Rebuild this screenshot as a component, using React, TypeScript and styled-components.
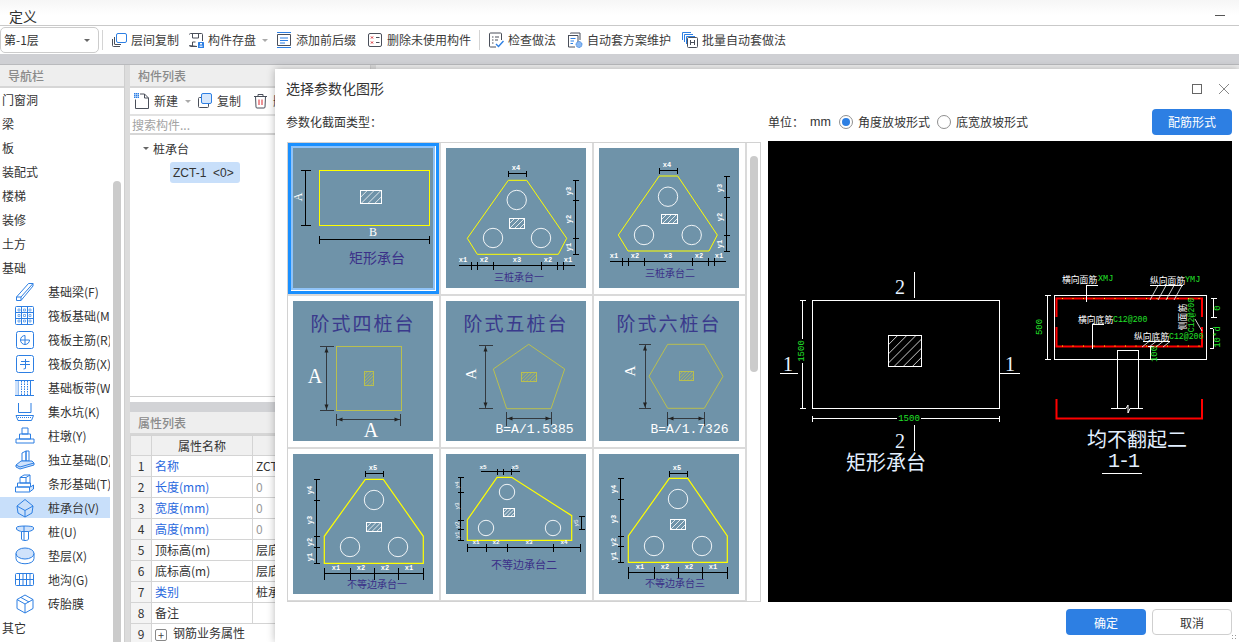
import React, { useId } from "react";
import styled, { createGlobalStyle } from "styled-components";

const SANS = '"Noto Sans CJK SC", "Liberation Sans", sans-serif';
const BLUE = "#2d7fe3";
const DARK = "#4a4f5a";

const Global = createGlobalStyle`
  html, body { margin: 0; padding: 0; background: #fff; overflow: hidden; }
  *, *::before, *::after { box-sizing: border-box; }
`;

const Page = styled.div`
  position: relative; width: 1239px; height: 642px; overflow: hidden;
  display: flex; flex-direction: column; font: 12px/1 ${SANS}; color: #333; background: #fff;
`;
const MenuBar = styled.div`
  height: 26px; flex: none; display: flex; align-items: center; justify-content: space-between;
  padding: 6px 14px 0 9px; font-size: 14px; color: #333;
  background: linear-gradient(#f6f6f6, #fff 60%); border-bottom: 1px solid #c9c9c9;
`;
const MinDash = styled.span` width: 10px; height: 1px; background: #555; `;
const Toolbar = styled.div` height: 28px; flex: none; display: flex; align-items: center; background: #fff; `;
const FloorSelect = styled.div`
  width: 99px; height: 26px; border: 1px solid #ccc; border-radius: 5px; display: flex; align-items: center;
  justify-content: space-between; padding: 0 8px 0 3px; font-size: 12px; margin-right: 3px;
`;
const Caret = styled.i<{ $c?: string }>`
  display: inline-block; width: 0; height: 0; border-left: 3px solid transparent; border-right: 3px solid transparent;
  border-top: 3px solid ${(p) => p.$c || "#666"};
`;
const Sep = styled.span<{ $ml: number }>` width: 1px; height: 20px; background: #d4d4d4; margin-left: ${(p) => p.$ml}px; `;
const ToolItem = styled.div<{ $ml: number }>`
  display: flex; align-items: center; gap: 4px; margin-left: ${(p) => p.$ml}px; white-space: nowrap; color: #3c3c3c;
`;
const Band = styled.div` height: 11px; flex: none; background: #cfd0d4; border-bottom: 1px solid #b9babd; `;
const Main = styled.div` flex: 1; min-height: 0; display: flex; background: #dcdcdc; `;
const Nav = styled.div` width: 124px; flex: none; position: relative; background: #fff; overflow: hidden; `;
const PanelHead = styled.div`
  height: 23px; display: flex; align-items: center; padding-left: 8px; background: #eeeeee;
  border-bottom: 2px solid #d6d6d6; color: #8a8a8a; font-weight: 500; flex: none;
`;
const NavList = styled.div` display: flex; flex-direction: column; gap: 3px; padding-top: 1px; width: 110px; `;
const NavTop = styled.div` height: 21px; display: flex; align-items: center; padding-left: 2px; `;
const NavSub = styled.div<{ $on?: boolean }>`
  height: 21px; display: flex; align-items: center; padding-left: 15px; gap: 13px; white-space: nowrap; overflow: hidden;
  background: ${(p) => (p.$on ? "#c8dffa" : "transparent")};
`;
const NavScroll = styled.div` position: absolute; left: 113px; top: 116px; bottom: 0; width: 8px; background: #cbcbcb; border-radius: 4px 4px 0 0; `;
const Gutter = styled.div` width: 6px; flex: none; background: #dcdcdc; border-left: 1px solid #cfcfcf; `;
const Center = styled.div` width: 240px; flex: none; display: flex; flex-direction: column; `;
const ListPanel = styled.div` height: 332px; flex: none; background: #fff; display: flex; flex-direction: column; border-bottom: 1px solid #ccc; `;
const ListTools = styled.div` height: 28px; flex: none; display: flex; align-items: center; padding-left: 4px; border-bottom: 2px solid #e2e2e2; `;
const SearchBox = styled.div`
  height: 19px; flex: none; display: flex; align-items: center; padding-left: 2px; color: #a3a3a3; border-bottom: 2px solid #d6d6d6;
`;
const TreeRoot = styled.div` height: 27px; display: flex; align-items: center; gap: 4px; padding-left: 13px; `;
const Chip = styled.div`
  margin-left: 40px; width: 70px; height: 21px; display: flex; align-items: center; padding-left: 3px; border-radius: 3px; background: #c8dffa;
  font-family: "Liberation Sans", sans-serif; white-space: pre; font-size: 12px;
`;
const SplitBand = styled.div` height: 15px; flex: none; background: linear-gradient(#fff 33%, #d2d3d6 33%); `;
const PropPanel = styled.div` flex: 1; background: #fff; display: flex; flex-direction: column; overflow: hidden; `;
const PropTable = styled.table`
  border-collapse: collapse; table-layout: fixed; width: 240px; font-size: 12px;
  td, th { border: 1px solid #d4d4d4; height: 21px; padding: 0 3px; font-weight: 400; white-space: nowrap; overflow: hidden; }
  th { background: #f0f0f0; height: 20px; }
`;
const NumCell = styled.td` background: #f4f4f4; text-align: center; `;
const NameCell = styled.td<{ $link?: boolean }>` color: ${(p) => (p.$link ? "#2a69de" : "#333")}; `;
const ValCell = styled.td<{ $muted?: boolean }>` color: ${(p) => (p.$muted ? "#999" : "#333")}; `;
const PlusBox = styled.span`
  display: inline-flex; width: 12px; height: 12px; border: 1px solid #888; border-radius: 2px; align-items: center; justify-content: center;
  font-size: 11px; margin: 0 6px 0 0; vertical-align: -2px; color: #444;
`;
const RightPanel = styled.div` flex: 1; background: #fff; `;

const Dialog = styled.div`
  position: absolute; left: 275px; top: 69px; width: 964px; height: 573px; background: #fff;
  box-shadow: 0 0 8px rgba(0,0,0,.28); display: flex; flex-direction: column;
`;
const DlgTitle = styled.div`
  height: 39px; flex: none; display: flex; align-items: center; justify-content: space-between; padding: 0 10px 2px 11px; font-size: 14px; color: #333;
`;
const WinBtns = styled.div` display: flex; gap: 17px; align-items: center; padding-top: 2px; `;
const DlgBody = styled.div` flex: 1; min-height: 0; display: flex; padding-left: 12px; `;
const LeftCol = styled.div` width: 481px; flex: none; display: flex; flex-direction: column; `;
const SecLabel = styled.div` height: 34px; flex: none; display: flex; align-items: center; margin-left: -1px; padding-bottom: 6px; `;
const Gallery = styled.div` height: 461px; width: 474px; border: 1px solid #d2d2d2; display: flex; overflow: hidden; position: relative; `;
const Cells = styled.div` display: grid; grid-template-columns: repeat(3, 153px); grid-auto-rows: 153px; width: 459px; flex: none; `;
const Cell = styled.div<{ $on?: boolean }>`
  padding: 5px; border-right: 2px solid #dadada; border-bottom: 2px solid #dadada; position: relative;
  &::before { content: ""; position: absolute; left: 0; top: 0; width: 151px; height: 151px; border: 3px solid ${(p) => (p.$on ? "#1a90ff" : "transparent")}; }
`;
const ThumbSvg = styled.svg<{ $on?: boolean }>`
  display: block; background: #6f93a9; width: 140px; height: 140px; box-shadow: ${(p) => (p.$on ? "0 0 0 2px #8fc3f8" : "none")};
`;
const GalleryScroll = styled.div` position: absolute; left: 462px; top: 13px; width: 8px; height: 216px; background: #cbcbcb; border-radius: 4px; `;
const RightCol = styled.div` width: 464px; flex: none; display: flex; flex-direction: column; `;
const OptRow = styled.div` height: 33px; flex: none; display: flex; align-items: center; padding-bottom: 6px; color: #333; `;
const Unit = styled.span` width: 42px; `;
const UnitVal = styled.span` width: 29px; font-family: "Liberation Sans", sans-serif; font-size: 12.5px; padding-top: 2px; `;
const RadioLabel = styled.label` display: flex; align-items: center; gap: 5px; margin-right: 7px; `;
const Radio = styled.span<{ $on?: boolean }>`
  width: 14px; height: 14px; border-radius: 50%; border: 1px solid #8f8f8f; display: flex; align-items: center; justify-content: center;
  &::after { content: ""; width: 8px; height: 8px; border-radius: 50%; background: ${(p) => (p.$on ? BLUE : "transparent")}; }
`;
const Spacer = styled.span` flex: 1; `;
const PrimaryBtn = styled.button`
  width: 80px; height: 26px; border: 0; border-radius: 4px; background: ${BLUE}; color: #fff; font: 12px ${SANS}; padding: 0;
`;
const GhostBtn = styled.button`
  width: 80px; height: 26px; border: 1px solid #cfcfcf; border-radius: 4px; background: #fff; color: #333; font: 12px ${SANS}; padding: 0;
`;
const Preview = styled.svg` display: block; width: 464px; height: 461px; background: #000; `;
const Footer = styled.div` height: 40px; flex: none; display: flex; justify-content: flex-end; align-items: flex-start; gap: 6px; padding: 7px 7px 0 0; `;
const Grip = styled.span`
  position: absolute; right: 1px; bottom: 1px; width: 7px; height: 7px;
  background-image: radial-gradient(#999 1px, transparent 1px); background-size: 3px 3px;
`;

/* ---------- svg helpers ---------- */
type TP = { x: number; y: number; s?: number; c?: string; rot?: number; f?: string; w?: number; a?: "middle" | "start"; ls?: number; children: React.ReactNode };
const T = ({ x, y, s = 8, c = "#fff", rot, f = SANS, w = 400, a = "middle", ls, children }: TP) => (
  <text x={x} y={y} fontSize={s} fill={c} fontFamily={f} fontWeight={w} textAnchor={a} dominantBaseline="central" letterSpacing={ls}
    transform={rot ? `rotate(${rot} ${x} ${y})` : undefined}>{children}</text>
);
const MONO = '"Liberation Mono", monospace';
const SER = '"Liberation Serif", "Noto Sans CJK SC", serif';

const L = ({ x1, y1, x2, y2, c = "#000", w = 1 }: { x1: number; y1: number; x2: number; y2: number; c?: string; w?: number }) => (
  <line x1={x1} y1={y1} x2={x2} y2={y2} stroke={c} strokeWidth={w} shapeRendering="crispEdges" />
);
const HDim = ({ y, x1, x2, ticks, t = 4, c = "#000" }: { y: number; x1: number; x2: number; ticks: number[]; t?: number; c?: string }) => (
  <g>
    <L x1={x1} y1={y} x2={x2} y2={y} c={c} />
    {ticks.map((v) => <L key={v} x1={v} y1={y - t} x2={v} y2={y + t} c={c} />)}
  </g>
);
const VDim = ({ x, y1, y2, ticks, t = 3, c = "#000" }: { x: number; y1: number; y2: number; ticks: number[]; t?: number; c?: string }) => (
  <g>
    <L x1={x} y1={y1} x2={x} y2={y2} c={c} />
    {ticks.map((v) => <L key={v} x1={x - t} y1={v} x2={x + t} y2={v} c={c} />)}
  </g>
);
const Hatch = ({ x, y, w, h, c = "#fff", n = 5, sw = 1 }: { x: number; y: number; w: number; h: number; c?: string; n?: number; sw?: number }) => {
  const id = useId();
  const lines = [];
  const step = (w + h) / n;
  for (let i = 1; i < n; i++) {
    const d = i * step;
    lines.push(<line key={i} x1={x + d} y1={y} x2={x + d - h} y2={y + h} stroke={c} strokeWidth={0.8} />);
  }
  return (
    <g>
      <clipPath id={id}><rect x={x} y={y} width={w} height={h} /></clipPath>
      <g clipPath={`url(#${id})`}>{lines}</g>
      <rect x={x} y={y} width={w} height={h} fill="none" stroke={c} strokeWidth={sw} shapeRendering="crispEdges" />
    </g>
  );
};
const Poly = ({ p, c = "#ffff00", w = 1 }: { p: number[][]; c?: string; w?: number }) => (
  <polygon points={p.map((q) => q.join(",")).join(" ")} fill="none" stroke={c} strokeWidth={w} />
);
const Piles = ({ c, r = 9.7 }: { c: number[][]; r?: number }) => (
  <g>{c.map((q, i) => <circle key={i} cx={q[0]} cy={q[1]} r={r} fill="none" stroke="#fff" strokeWidth={0.9} />)}</g>
);
const TITLE = "#3b3088";
const Title = ({ x, y, s = 10, children }: { x: number; y: number; s?: number; children: React.ReactNode }) => <T x={x} y={y} s={s} c={TITLE}>{children}</T>;
const Big = ({ children }: { children: React.ReactNode }) => <T x={70} y={21} s={19} c="#3a3a8c" ls={2}>{children}</T>;
const ArrowV = ({ x, y1, y2, t = 7 }: { x: number; y1: number; y2: number; t?: number }) => (
  <g>
    <L x1={x} y1={y1} x2={x} y2={y2} c="#33393f" />
    <L x1={x - t} y1={y1} x2={x + t} y2={y1} c="#33393f" />
    <L x1={x - t} y1={y2} x2={x + t} y2={y2} c="#33393f" />
    <polygon points={`${x},${y1 + 1} ${x - 2},${y1 + 6} ${x + 2},${y1 + 6}`} fill="#222" />
    <polygon points={`${x},${y2 - 1} ${x - 2},${y2 - 6} ${x + 2},${y2 - 6}`} fill="#222" />
  </g>
);
const ArrowH = ({ y, x1, x2, t = 6 }: { y: number; x1: number; x2: number; t?: number }) => (
  <g>
    <L x1={x1} y1={y} x2={x2} y2={y} c="#33393f" />
    <L x1={x1} y1={y - t} x2={x1} y2={y + t} c="#33393f" />
    <L x1={x2} y1={y - t} x2={x2} y2={y + t} c="#33393f" />
    <polygon points={`${x1 + 1},${y} ${x1 + 6},${y - 2} ${x1 + 6},${y + 2}`} fill="#222" />
    <polygon points={`${x2 - 1},${y} ${x2 - 6},${y - 2} ${x2 - 6},${y + 2}`} fill="#222" />
  </g>
);
const DY = "#b9bf4f";

const thumbs: React.ReactNode[] = [
  <g key="1">
    <rect x={26.5} y={22.5} width={110} height={55} fill="none" stroke="#ffff00" />
    <Hatch x={67.5} y={42.5} w={21} h={13} />
    <VDim x={12.5} y1={22.5} y2={77.5} ticks={[22.5, 77.5]} t={5} />
    <T x={5} y={49} s={12} f={SER} rot={-90}>A</T>
    <HDim y={91.5} x1={26.5} x2={136.5} ticks={[26.5, 136.5]} />
    <T x={80} y={84} s={12} f={SER}>B</T>
    <Title x={84} y={109} s={14}>矩形承台</Title>
  </g>,
  <g key="2">
    <Poly p={[[62.3, 32.3], [80.7, 32.3], [120.7, 90.3], [112.3, 106.3], [31.3, 106.3], [21.3, 90.3]]} />
    <Piles c={[[70.7, 52], [47, 90], [95, 90]]} />
    <Hatch x={63.5} y={70.5} w={15} h={10} />
    <HDim y={25.5} x1={62.5} x2={80.5} ticks={[62.5, 80.5]} t={3} />
    <T x={70} y={20} s={7} f={MONO} w={700}>x4</T>
    <VDim x={129.5} y1={32.5} y2={106.5} ticks={[32.5, 52.5, 90.5, 106.5]} />
    <T x={123} y={43} s={7} f={MONO} rot={-90} w={700}>y3</T><T x={123} y={71} s={7} f={MONO} rot={-90} w={700}>y2</T><T x={123} y={99} s={7} f={MONO} rot={-90} w={700}>y1</T>
    <HDim y={117.5} x1={13} x2={129} ticks={[25.5, 31.5, 47.5, 95.5, 111.5, 117.5]} />
    <T x={17} y={112} s={7} f={MONO} w={700}>x1</T><T x={38} y={112} s={7} f={MONO} w={700}>x2</T><T x={71} y={112} s={7} f={MONO} w={700}>x3</T><T x={102} y={112} s={7} f={MONO} w={700}>x2</T><T x={122} y={112} s={7} f={MONO} w={700}>x1</T>
    <Title x={73} y={128}>三桩承台一</Title>
  </g>,
  <g key="3">
    <Poly p={[[60.3, 28], [78.7, 28], [118.3, 87], [110, 103], [29, 103], [19.3, 87]]} />
    <Piles c={[[69, 48.7], [45, 87], [92.7, 87]]} />
    <Hatch x={62.5} y={66.5} w={16} h={9} />
    <HDim y={22.5} x1={60.5} x2={78.5} ticks={[60.5, 78.5]} t={3} />
    <T x={68} y={17} s={7} f={MONO} w={700}>x4</T>
    <VDim x={127.5} y1={28.5} y2={103.5} ticks={[28.5, 49.5, 87.5, 103.5]} />
    <T x={121} y={40} s={7} f={MONO} rot={-90} w={700}>y3</T><T x={121} y={69} s={7} f={MONO} rot={-90} w={700}>y2</T><T x={121} y={96} s={7} f={MONO} rot={-90} w={700}>y1</T>
    <HDim y={113.5} x1={11} x2={127} ticks={[23.5, 29.5, 45.5, 93.5, 109.5, 115.5]} />
    <T x={15} y={108} s={7} f={MONO} w={700}>x1</T><T x={36} y={108} s={7} f={MONO} w={700}>x2</T><T x={69} y={108} s={7} f={MONO} w={700}>x3</T><T x={100} y={108} s={7} f={MONO} w={700}>x2</T><T x={120} y={108} s={7} f={MONO} w={700}>x1</T>
    <Title x={71} y={124}>三桩承台二</Title>
  </g>,
  <g key="4">
    <Big>阶式四桩台</Big>
    <rect x={43.5} y={45.5} width={65} height={64} fill="none" stroke={DY} />
    <Hatch x={71.5} y={70.5} w={9} h={14} c={DY} n={7} />
    <ArrowV x={33.5} y1={45.5} y2={109.5} />
    <T x={22} y={75} s={20} f={SER}>A</T>
    <ArrowH y={118.5} x1={43.5} x2={107.5} />
    <T x={78} y={129} s={20} f={SER}>A</T>
  </g>,
  <g key="5">
    <Big>阶式五桩台</Big>
    <Poly c={DY} p={[[82.7, 43.3], [118.7, 68], [105, 107.7], [60.7, 107.7], [47.3, 68]]} />
    <Hatch x={75.5} y={71.5} w={15} h={9} c={DY} n={7} />
    <ArrowV x={39.5} y1={44.5} y2={107.5} />
    <T x={25} y={73} s={15} f={SER} rot={-90}>A</T>
    <ArrowH y={117.5} x1={60.5} x2={105.5} t={7} />
    <T x={88.5} y={128.5} s={13} f={MONO}>B=A/1.5385</T>
  </g>,
  <g key="6">
    <Big>阶式六桩台</Big>
    <Poly c={DY} p={[[68.7, 43.3], [105.3, 43.3], [124, 75.3], [105.3, 107.3], [68.7, 107.3], [50, 75.3]]} />
    <Hatch x={80.5} y={70.5} w={14} h={9} c={DY} n={7} />
    <ArrowV x={46} y1={43.5} y2={107.5} t={6} />
    <T x={31} y={70} s={15} f={SER} rot={-90}>A</T>
    <ArrowH y={117.5} x1={68.5} x2={105.5} t={7} />
    <T x={90.5} y={128.5} s={13} f={MONO}>B=A/1.7326</T>
  </g>,
  <g key="7">
    <Poly w={1.2} p={[[72.3, 25.3], [90.3, 25.3], [130.3, 82.3], [130.3, 109.3], [31.3, 109.3], [31.3, 82.3]]} />
    <Piles c={[[81, 46], [57, 93], [105, 93]]} />
    <Hatch x={73.5} y={68.5} w={15} h={9} />
    <HDim y={19.5} x1={72.5} x2={90.5} ticks={[72.5, 90.5]} t={3} />
    <T x={80} y={14} s={7} f={MONO} w={700}>x5</T>
    <VDim x={23.5} y1={25.5} y2={109.5} ticks={[25.5, 46.5, 82.5, 93.5, 109.5]} />
    <T x={17} y={36} s={7} f={MONO} rot={-90} w={700}>y4</T><T x={17} y={66} s={7} f={MONO} rot={-90} w={700}>y3</T><T x={17} y={88} s={7} f={MONO} rot={-90} w={700}>y2</T><T x={17} y={103} s={7} f={MONO} rot={-90} w={700}>y1</T>
    <HDim y={119.5} x1={31.5} x2={130.5} ticks={[31.5, 57.5, 81.5, 105.5, 130.5]} t={6} />
    <T x={43} y={114} s={7} f={MONO} w={700}>x1</T><T x={68} y={114} s={7} f={MONO} w={700}>x2</T><T x={92} y={114} s={7} f={MONO} w={700}>x2</T><T x={116} y={114} s={7} f={MONO} w={700}>x1</T>
    <Title x={84} y={129}>不等边承台一</Title>
  </g>,
  <g key="8">
    <Poly w={1.2} p={[[51, 23.3], [65.7, 23.3], [125.7, 61.7], [125.7, 86.3], [21.3, 86.3], [21.3, 66]]} />
    <Piles r={7.7} c={[[61, 38], [40, 74], [107, 74]]} />
    <Hatch x={57.5} y={54.5} w={11} h={8} />
    <HDim y={17.5} x1={34.5} x2={73.5} ticks={[51.5, 57.5, 65.5]} t={3} />
    <T x={37} y={13} s={6} f={MONO} w={700}>x5</T><T x={69} y={13} s={6} f={MONO} w={700}>x5</T>
    <VDim x={14.5} y1={23.5} y2={86.5} ticks={[23.5, 38.5, 66.5, 75.5, 86.5]} />
    <T x={11} y={31} s={6} f={MONO} rot={-90}>y4</T><T x={11} y={52} s={6} f={MONO} rot={-90}>y3</T><T x={11} y={71} s={6} f={MONO} rot={-90}>y2</T><T x={11} y={81} s={6} f={MONO} rot={-90}>y1</T>
    <VDim x={135.5} y1={62.5} y2={75.5} ticks={[62.5, 75.5]} />
    <T x={130} y={69} s={6} f={MONO} rot={-90}>y5</T>
    <HDim y={93.5} x1={21.5} x2={134.5} ticks={[21.5, 40.5, 61.5, 107.5, 134.5]} />
    <T x={30} y={88} s={6} f={MONO} w={700}>x1</T><T x={50} y={88} s={6} f={MONO} w={700}>x2</T><T x={83} y={88} s={6} f={MONO} w={700}>x3</T><T x={118} y={88} s={6} f={MONO} w={700}>x4</T>
    <Title x={78} y={110} s={11}>不等边承台二</Title>
  </g>,
  <g key="9">
    <Poly w={1.2} p={[[70.3, 24.3], [88.7, 24.3], [128.3, 82], [128.3, 108.3], [29.3, 108.3], [29.3, 82]]} />
    <Piles c={[[79, 45], [55, 92], [103, 92]]} />
    <Hatch x={71.5} y={65.5} w={15} h={10} />
    <HDim y={19.5} x1={70.5} x2={88.5} ticks={[70.5, 88.5]} t={3} />
    <T x={78} y={14} s={7} f={MONO} w={700}>x5</T>
    <VDim x={21.5} y1={24.5} y2={108.5} ticks={[24.5, 45.5, 82.5, 92.5, 108.5]} />
    <T x={15} y={35} s={7} f={MONO} rot={-90} w={700}>y4</T><T x={15} y={65} s={7} f={MONO} rot={-90} w={700}>y3</T><T x={15} y={88} s={7} f={MONO} rot={-90} w={700}>y2</T><T x={15} y={102} s={7} f={MONO} rot={-90} w={700}>y1</T>
    <HDim y={118.5} x1={29.5} x2={128.5} ticks={[29.5, 55.5, 79.5, 103.5, 128.5]} t={6} />
    <T x={41} y={113} s={7} f={MONO} w={700}>x1</T><T x={66} y={113} s={7} f={MONO} w={700}>x2</T><T x={90} y={113} s={7} f={MONO} w={700}>x2</T><T x={114} y={113} s={7} f={MONO} w={700}>x1</T>
    <Title x={76} y={128}>不等边承台三</Title>
  </g>,
];

const GREEN = "#22e02a";
const RED = "#ff0000";
const CadPreview = () => {
  const dots: number[] = [];
  for (let x = 294; x < 434; x += 10.5) dots.push(x);
  return (
    <Preview viewBox="0 0 464 461">
      <rect x={44.5} y={159.5} width={187} height={108} fill="none" stroke="#fff" shapeRendering="crispEdges" />
      <Hatch x={120.5} y={194.5} w={33} h={31} n={7} />
      <L x1={146.5} y1={131} x2={146.5} y2={157} c="#fff" />
      <L x1={146.5} y1={284} x2={146.5} y2={310} c="#fff" />
      <L x1={12} y1={232.5} x2={30} y2={232.5} c="#fff" />
      <L x1={232} y1={232.5} x2={252} y2={232.5} c="#fff" />
      <T x={132} y={146} s={20} f={SER} c="#e6f2ff">2</T>
      <T x={132} y={300} s={20} f={SER} c="#e6f2ff">2</T>
      <T x={20} y={223} s={20} f={SER} c="#e6f2ff">1</T>
      <T x={242} y={223} s={20} f={SER} c="#e6f2ff">1</T>
      <VDim x={34.5} y1={159.5} y2={267.5} ticks={[159.5, 267.5]} t={3} c="#fff" />
      <HDim y={277.5} x1={44.5} x2={231.5} ticks={[44.5, 231.5]} t={3} c="#fff" />
      <rect x={30} y={198} width={9} height={24} fill="#000" />
      <rect x={129} y={273} width={24} height={9} fill="#000" />
      <T x={34} y={210} s={9} f={MONO} c={GREEN} rot={-90}>1500</T>
      <T x={141} y={278} s={9} f={MONO} c={GREEN}>1500</T>
      <T x={118} y={320} s={20} c="#e2efff">矩形承台</T>

      <rect x={286.5} y={154.5} width={152} height={64} fill="none" stroke="#fff" shapeRendering="crispEdges" />
      <polyline points="288.5,176 288.5,157.5 434,157.5 434,176" fill="none" stroke={RED} strokeWidth={2} />
      <polyline points="288.5,186 288.5,205.5 434,205.5 434,186" fill="none" stroke={RED} strokeWidth={2} />
      {dots.map((x) => <React.Fragment key={x}>
        <rect x={x} y={157} width={1} height={1} fill="#ff0" /><rect x={x} y={204.5} width={1} height={1} fill="#ff0" />
      </React.Fragment>)}
      <polyline points="349.5,267.5 349.5,209.5 370.5,209.5 370.5,267.5" fill="none" stroke="#fff" shapeRendering="crispEdges" />
      <polyline points="343,267.5 358,267.5 360,264 360,272 362,267.5 375,267.5" fill="none" stroke="#fff" />
      <polyline points="288.5,258 288.5,277.5 434,277.5 434,258" fill="none" stroke={RED} strokeWidth={2} />
      <VDim x={279.5} y1={154.5} y2={218.5} ticks={[154.5, 218.5]} c="#fff" />
      <T x={272} y={186} s={9} f={MONO} c={GREEN} rot={-90}>500</T>

      <T x={294} y={138} s={8.8} a="start">横向面筋</T><T x={330} y={138} s={8.5} a="start" f={MONO} c={GREEN}>XMJ</T>
      <polyline points="318,161 318,144 330,144" fill="none" stroke="#fff" shapeRendering="crispEdges" />
      <T x={382} y={139} s={8.8} a="start">纵向面筋</T><T x={417} y={139} s={8.5} a="start" f={MONO} c={GREEN}>YMJ</T>
      <polyline points="382,144.5 415,144.5" fill="none" stroke="#fff" shapeRendering="crispEdges" />
      <path d="M390 144.5L382 159M398 144.5L390 159M406 144.5L398 159M414 144.5L406 159" stroke="#fff" fill="none" strokeWidth={0.8} />
      <T x={310} y={178} s={8.8} a="start">横向底筋</T><T x={345} y={178} s={8.2} a="start" f={MONO} c={GREEN}>C12@200</T>
      <polyline points="324.5,208 324.5,183.5 336,183.5" fill="none" stroke="#fff" shapeRendering="crispEdges" />
      <T x={366} y={195} s={8.8} a="start">纵向底筋</T><T x={401} y={195} s={8.2} a="start" f={MONO} c={GREEN}>C12@200</T>
      <polyline points="375,200.5 402,200.5" fill="none" stroke="#fff" shapeRendering="crispEdges" />
      <path d="M381 200.5L374 206M388 200.5L381 206M395 200.5L388 206M402 200.5L395 206" stroke="#fff" fill="none" strokeWidth={0.8} />
      <T x={414} y={176} s={8.8} rot={-90}>侧面筋</T>
      <T x={423} y={174} s={8.2} f={MONO} c={GREEN} rot={-90}>C12@200</T>
      <path d="M427 178L434 190" stroke="#fff" strokeWidth={0.8} />
      <VDim x={445.5} y1={157.5} y2={176.5} ticks={[157.5, 176.5]} c="#fff" />
      <T x={450} y={167} s={9} f={MONO} c={GREEN} rot={-90}>0</T>
      <L x1={442} y1={187.5} x2={445} y2={187.5} c="#fff" />
      <L x1={442} y1={207.5} x2={445} y2={207.5} c="#fff" />
      <L x1={445.5} y1={187.5} x2={445.5} y2={207.5} c="#fff" />
      <T x={450} y={196} s={9} f={MONO} c={GREEN} rot={-90}>10*d</T>
      <VDim x={382.5} y1={205.5} y2={218.5} ticks={[205.5, 218.5]} c="#fff" />
      <T x={387} y={213} s={9} f={MONO} c={GREEN} rot={-90}>100</T>

      <T x={369} y={297} s={20} c="#e2efff">均不翻起二</T>
      <T x={355} y={320} s={20} f={MONO} c="#e2efff" ls={-2}>1-1</T>
      <L x1={334} y1={332.5} x2={374} y2={332.5} c="#fff" />
    </Preview>
  );
};

/* ---------- icons ---------- */
const Ico = ({ size = 16, children }: { size?: number; children: React.ReactNode }) => (
  <svg width={size} height={size} viewBox={`0 0 ${size} ${size}`} fill="none" style={{ flex: "none" }}>{children}</svg>
);
const I = {
  copyLayer: <Ico><path d="M1.5 7v6.5a1 1 0 0 0 1 1H9M3.5 5v7a.5.5 0 0 0 .5.5h6" stroke={DARK} /><rect x="5.5" y="1.5" width="10" height="9" rx="1.5" stroke={BLUE} /></Ico>,
  save: <Ico><path d="M1.5 2.5a1 1 0 0 1 1-1h11a1 1 0 0 1 1 1V9M9 14.5H2.5a1 1 0 0 1-1-1zM4.5 2v4h6V2M4.5 14v-4h3" stroke={DARK} /><rect x="10" y="10" width="6" height="6" rx=".5" fill={BLUE} /><rect x="12" y="11" width="2" height="1.5" fill="#fff" /><rect x="11.5" y="13.5" width="3" height="1.5" fill="#cfe2fb" /></Ico>,
  affix: <Ico><path d="M1 .5H15M1 15.5H15" stroke={BLUE} /><path d="M1.5 2.5h13v11h-13z" stroke={DARK} /><path d="M4 6h8M4 8.5h8M4 11h5" stroke={BLUE} /></Ico>,
  unused: <Ico><rect x="1.5" y="1.5" width="13" height="13" rx="1.5" stroke={DARK} /><path d="M4 4.5l2 2m0-2l-2 2M4 9.5l2 2m0-2l-2 2" stroke="#d9262c" /><path d="M9 5.5h3.5M9 10.500h3.500" stroke={DARK} /></Ico>,
  check: <Ico><path d="M8 15H2.500a1 1 0 0 1-1-1V2a1 1 0 0 1 1-1h10a1 1 0 0 1 1 1v6" stroke={DARK} /><path d="M4 5h1.500M7 5h4M4 8h1.500M7 8h3M4 11h1.500" stroke={DARK} /><path d="M8 12l2.500 2.500L15.500 9" stroke={BLUE} strokeWidth="1.4" /></Ico>,
  auto: <Ico><path d="M3.500 1.500V1H13v7M1 3.500h10v7" stroke={DARK} /><path d="M8 15H1.500V3.500" stroke={DARK} /><path d="M3.500 6.500H8.500M3.500 9H7M3.500 11.500H6" stroke={BLUE} /><circle cx="12" cy="12.500" r="3" fill="#8cb9f1" stroke={BLUE} strokeDasharray="1 .7" /></Ico>,
  batch: <Ico><path d="M.5 8V.5H9M2.500 10V2.500H11M4.500 12V4.500H13" stroke={BLUE} /><rect x="5.500" y="5.500" width="10" height="10" rx="1" stroke={DARK} /><path d="M8.500 8v5M12.500 8v5M8.500 10.500h4" stroke={DARK} /></Ico>,
  newDoc: <Ico><path d="M1.500 6.500V15.500H14.500V5L10.500 1H6" stroke={DARK} /><path d="M10.500 1V5H14.500" stroke={DARK} /><rect x="0" y="0" width="5" height="5" fill={BLUE} /><path d="M0 1.500h5M0 3.500h5M1.500 0v5M3.500 0v5" stroke="#cfe2fb" strokeWidth=".6" /></Ico>,
  dup: <Ico><rect x="4.500" y=".5" width="10" height="10" rx="1.500" fill="#d6e7fc" stroke={BLUE} /><path d="M4 4.500H2.500a1 1 0 0 0-1 1v8a1 1 0 0 0 1 1h8a1 1 0 0 0 1-1V11" stroke={DARK} /></Ico>,
  trash: <Ico><path d="M1 3.500h13M5 3V1.500h5V3M2.500 3.500l.5 10.500a1 1 0 0 0 1 1h7a1 1 0 0 0 1-1l.5-10.500" stroke={DARK} /><path d="M6 6.500v5.500M9 6.500v5.500" stroke="#d9262c" /></Ico>,
};
const N = ({ children }: { children: React.ReactNode }) => (
  <svg width="20" height="20" viewBox="0 0 20 20" fill="none" stroke={BLUE} strokeWidth="1" style={{ flex: "none" }}>{children}</svg>
);
const navIcons: Record<string, React.ReactNode> = {
  beam: <N><path d="M1.500 15L13.500 1.500H18V4L6 18.500H1.500zM1.500 15H6V18.500M6 15L18 1.500" /></N>,
  raft: <N><rect x=".5" y=".5" width="18" height="18" rx="1" /><path d="M6.500 1v17M12.500 1v17M1 6.500h17M1 12.500h17" /><path d="M3 3h2v2H3zM8.500 8.500h2v2h-2zM14 14h2v2h-2zM8.500 3h2v2h-2zM14 3h2v2h-2zM3 8.500h2v2H3zM14 8.500h2v2h-2zM3 14h2v2H3zM8.500 14h2v2h-2z" strokeWidth=".6" /></N>,
  main: <N><rect x="1.500" y="1.500" width="17" height="17" rx="2" /><path d="M10 5.500a4.500 4.500 0 1 0 4.500 4.500H6M10 5.500v9" /></N>,
  neg: <N><rect x="1.500" y="1.500" width="17" height="17" rx="2" /><path d="M6 7.500h8.500M5 10.500h10M10.500 5v9.500l-2 .5" /></N>,
  strip: <N><path d="M0 2.500h19M0 17.500h19M3 3v14M15.500 3v14" /><path d="M6.500 3v14M9.500 3v14M12.500 3v14" strokeDasharray="1.500 1" /><rect x="0" y="3" width="3" height="14" fill="#cfe2fb" stroke="none" /></N>,
  pit: <N><path d="M3.500 1v9.500h12.500V1" /><path d="M1 13.500L3 18.500H16.500L18.500 13.500z" /><path d="M3 15.500h13" strokeDasharray="1 1" /></N>,
  pier: <N><path d="M7 2h6v6H7zM4.500 8h11v5h-11zM1 13h18v4H1z" /></N>,
  iso: <N><path d="M7 3l4-2v10H7zM11 1h3v10h-3z" /><path d="M1 15l5-4h11l2 2v2l-14 4-4-2z" fill="#cfe2fb" /><path d="M1 15l4 2 14-4" /></N>,
  strip2: <N><path d="M5 9V3.500L9 1h6v8zM5 3.500h6V9M11 3.500L15 1" /><path d="M2.500 9h13v4h-13zM.5 13h14v5H.5z" /><path d="M14.500 18l4-3v-4l-3 2" fill="#cfe2fb" /></N>,
  cap: <N><path d="M10 1.500l8 6.500-1 7-7 4-7-4-1-7z" /><path d="M2 8l8 4.500L18 8M10 12.500V19" /></N>,
  pile: <N><path d="M1.500 5.500c0-2 17-2 17 0v1.500c0 1.500-5 2.500-5 2.500h-7S1.500 8.500 1.500 7z" fill="#cfe2fb" /><path d="M6.500 9.500V17c0 2 7 2 7 0V9.500M9 4v14" /></N>,
  pad: <N><ellipse cx="10" cy="7.500" rx="9" ry="5.500" fill="#cfe2fb" /><path d="M1 7.500v5c0 7 18 7 18 0v-5" /></N>,
  ditch: <N><rect x=".5" y="3.500" width="18" height="12" rx="1" /><path d="M1 9.500h17M4.500 4v11M8 4v11M11.500 4v11M15 4v11" /></N>,
  brick: <N><path d="M10 1l8 4.500v9L10 19l-8-4.500v-9z" /><path d="M2 5.500l8 4.500 8-4.500M10 10v9M6 3.500l8 4.500" /></N>,
};
const subItems = [
  ["beam", "基础梁(F)"], ["raft", "筏板基础(M)"], ["main", "筏板主筋(R)"], ["neg", "筏板负筋(X)"], ["strip", "基础板带(W)"],
  ["pit", "集水坑(K)"], ["pier", "柱墩(Y)"], ["iso", "独立基础(D)"], ["strip2", "条形基础(T)"], ["cap", "桩承台(V)"],
  ["pile", "桩(U)"], ["pad", "垫层(X)"], ["ditch", "地沟(G)"], ["brick", "砖胎膜"],
];
const rows: [string, boolean, string, boolean][] = [
  ["名称", true, "ZCT-1", false], ["长度(mm)", true, "0", true], ["宽度(mm)", true, "0", true], ["高度(mm)", true, "0", true],
  ["顶标高(m)", false, "层底标高", false], ["底标高(m)", false, "层底标高", false], ["类别", true, "桩承台", false], ["备注", false, "", false],
];

export default function App() {
  return (
    <Page>
      <Global />
      <MenuBar>定义<MinDash /></MenuBar>
      <Toolbar>
        <FloorSelect>第-1层<Caret /></FloorSelect>
        <Sep $ml={0} />
        <ToolItem $ml={8}>{I.copyLayer}层间复制</ToolItem>
        <ToolItem $ml={9}>{I.save}构件存盘</ToolItem>
        <ToolItem $ml={6}><Caret $c="#aaa" /></ToolItem>
        <ToolItem $ml={8}>{I.affix}添加前后缀</ToolItem>
        <ToolItem $ml={11}>{I.unused}删除未使用构件</ToolItem>
        <Sep $ml={8} />
        <ToolItem $ml={8}>{I.check}检查做法</ToolItem>
        <ToolItem $ml={11}>{I.auto}自动套方案维护</ToolItem>
        <ToolItem $ml={11}>{I.batch}批量自动套做法</ToolItem>
      </Toolbar>
      <Band />
      <Main>
        <Nav>
          <PanelHead>导航栏</PanelHead>
          <NavList>
            {["门窗洞", "梁", "板", "装配式", "楼梯", "装修", "土方", "基础"].map((t) => <NavTop key={t}>{t}</NavTop>)}
            {subItems.map(([k, t]) => <NavSub key={k} $on={k === "cap"}>{navIcons[k]}{t}</NavSub>)}
            <NavTop>其它</NavTop>
          </NavList>
          <NavScroll />
        </Nav>
        <Gutter />
        <Center>
          <ListPanel>
            <PanelHead>构件列表</PanelHead>
            <ListTools>
              <ToolItem $ml={0}>{I.newDoc}新建</ToolItem>
              <ToolItem $ml={7}><Caret $c="#aaa" /></ToolItem>
              <ToolItem $ml={6}>{I.dup}复制</ToolItem>
              <ToolItem $ml={12}>{I.trash}删除</ToolItem>
            </ListTools>
            <SearchBox>搜索构件...</SearchBox>
            <TreeRoot><Caret />桩承台</TreeRoot>
            <Chip>ZCT-1  &lt;0&gt;</Chip>
          </ListPanel>
          <SplitBand />
          <PropPanel>
            <PanelHead>属性列表</PanelHead>
            <PropTable>
              <colgroup><col style={{ width: 21 }} /><col style={{ width: 101 }} /><col /></colgroup>
              <thead><tr><th /><th>属性名称</th><th>属性值</th></tr></thead>
              <tbody>
                {rows.map((r, i) => (
                  <tr key={r[0]}>
                    <NumCell>{i + 1}</NumCell>
                    <NameCell $link={r[1]}>{r[0]}</NameCell>
                    <ValCell $muted={r[3]}>{r[2]}</ValCell>
                  </tr>
                ))}
                <tr><NumCell>9</NumCell><NameCell colSpan={2}><PlusBox>+</PlusBox>钢筋业务属性</NameCell></tr>
              </tbody>
            </PropTable>
          </PropPanel>
        </Center>
        <Gutter />
        <RightPanel><PanelHead /></RightPanel>
      </Main>

      <Dialog>
        <DlgTitle>
          选择参数化图形
          <WinBtns>
            <svg width="10" height="10" viewBox="0 0 10 10" fill="none"><rect x=".5" y=".5" width="9" height="9" stroke="#666" /></svg>
            <svg width="10" height="10" viewBox="0 0 10 10" fill="none"><path d="M0 0L10 10M10 0L0 10" stroke="#888" /></svg>
          </WinBtns>
        </DlgTitle>
        <DlgBody>
          <LeftCol>
            <SecLabel>参数化截面类型：</SecLabel>
            <Gallery>
              <Cells>
                {thumbs.map((t, i) => (
                  <Cell key={i} $on={i === 0}><ThumbSvg $on={i === 0} viewBox="0 0 140 140">{t}</ThumbSvg></Cell>
                ))}
              </Cells>
              <GalleryScroll />
            </Gallery>
          </LeftCol>
          <RightCol>
            <OptRow>
              <Unit>单位：</Unit><UnitVal>mm</UnitVal>
              <RadioLabel><Radio $on />角度放坡形式</RadioLabel>
              <RadioLabel><Radio />底宽放坡形式</RadioLabel>
              <Spacer />
              <PrimaryBtn>配筋形式</PrimaryBtn>
            </OptRow>
            <CadPreview />
          </RightCol>
        </DlgBody>
        <Footer>
          <PrimaryBtn>确定</PrimaryBtn>
          <GhostBtn>取消</GhostBtn>
        </Footer>
        <Grip />
      </Dialog>
    </Page>
  );
}
